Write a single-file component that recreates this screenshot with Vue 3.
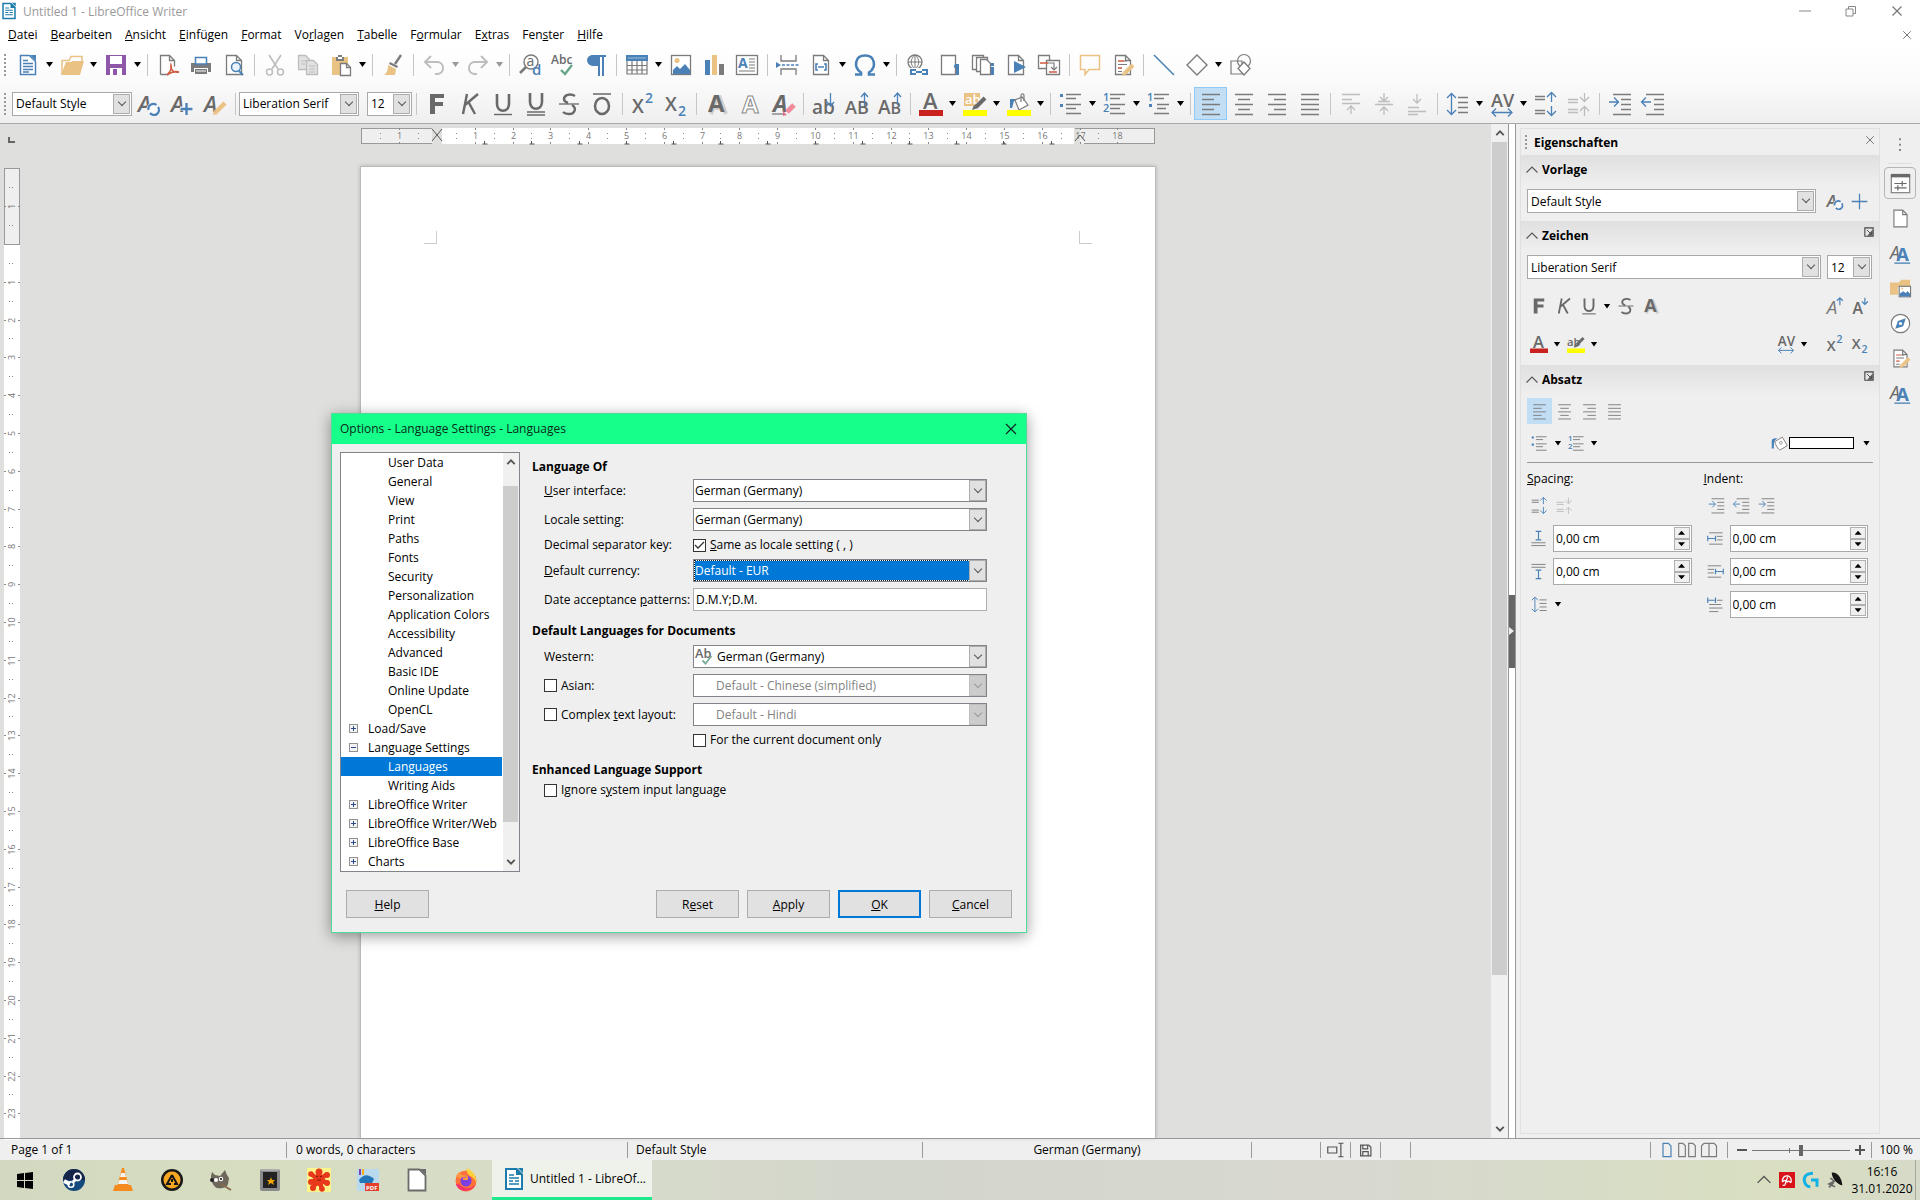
<template>
  <div class="desktop">
    <div class="titlebar">
      <Icon name="writer" :size="18" />
      <span class="caption">Untitled 1 - LibreOffice Writer</span>
      <button class="win" aria-label="Minimieren"><Icon name="minimize" :size="12" /></button>
      <button class="win" aria-label="Verkleinern"><Icon name="restore" :size="12" /></button>
      <button class="win" aria-label="Schließen"><Icon name="close" :size="12" /></button>
    </div>

    <nav class="menubar">
      <button v-for="m in menus" :key="m"><Mnemonic :text="m" /></button>
      <button class="close-doc" aria-label="Dokument schließen"><Icon name="close" :size="10" /></button>
    </nav>

    <div class="toolbar standard">
      <span class="grip"></span>
      <template v-for="(t, i) in standardBar" :key="i">
        <span v-if="t === '|'" class="sep"></span>
        <button v-else-if="t[0] === 'v'" class="drop" :class="{ off: t === 'v-' }" aria-label="Auswahl"></button>
        <button v-else class="tool" :aria-label="t"><Icon :name="t" :size="24" /></button>
      </template>
    </div>

    <div class="toolbar format">
      <span class="grip"></span>
      <div class="combo style-box">
        <select aria-label="Vorlage"><option>Default Style</option></select><i></i>
      </div>
      <button v-for="t in ['styleUpdate', 'styleNew', 'styleEdit']" :key="t" class="tool" :aria-label="t"><Icon :name="t" :size="24" /></button>
      <span class="sep"></span>
      <div class="combo style-box">
        <select aria-label="Schriftart"><option>Liberation Serif</option></select><i></i>
      </div>
      <div class="combo size-box">
        <select aria-label="Schriftgröße"><option>12</option></select><i></i>
      </div>
      <template v-for="(t, i) in formatBar" :key="i">
        <span v-if="t === '|'" class="sep"></span>
        <button v-else-if="t === 'v'" class="drop" aria-label="Auswahl"></button>
        <button v-else class="tool" :class="{ active: t === 'alignLeft' }" :aria-label="t"><Icon :name="t" :size="24" /></button>
      </template>
    </div>

    <main class="work">
      <div class="editor">
        <div class="ruler-row">
          <svg class="tab-kind" width="24" height="20"><path d="M9 9v5h6" fill="none" stroke="#666" stroke-width="2" /></svg>
          <svg class="h-ruler" width="796" height="20">
            <rect x="1.5" y=".5" width="793" height="15" fill="#efefef" stroke="#999" />
            <rect x="72" y="0" width="648" height="16" fill="#dfdfdd" />
            <rect x="82" y="0" width="632" height="16" fill="#fff" />
            <rect x="720" y="0" width="74" height="16" fill="#efefef" />
            <path d="M715 .5h79.500v15H724" fill="none" stroke="#999" />
            <g v-for="n in 20" :key="n">
              <text v-if="n !== 2" :x="cm(n)" y="11" class="num">{{ Math.abs(n - 2) }}</text>
              <path v-if="n !== 2" :d="`M${cm(n)} 0v2M${cm(n)} 14v2`" stroke="#888" />
              <path :d="`M${cm(n) - 19} 5v1m0 4v1`" stroke="#888" />
            </g>
            <path v-for="n in 13" :key="'t' + n" :d="`M${77 + Math.round(n * 47.2)}.5 13v3m-2 0h5`" stroke="#555" fill="none" />
            <path d="M72 1l10 12M82 1l-10 12M715 13l5-6 5 6" stroke="#555" fill="none" />
          </svg>
        </div>
        <div class="page-row">
          <svg class="v-ruler" width="24" height="100%">
            <rect x="4" y="0" width="16" height="100%" fill="#fff" />
            <rect x="4.5" y=".5" width="15" height="76" fill="#efefef" stroke="#999" />
            <g v-for="n in 25" :key="n">
              <text v-if="n !== 2" :transform="`translate(15 ${vcm(n)}) rotate(-90)`" class="num">{{ Math.abs(n - 2) }}</text>
              <path v-if="n !== 2" :d="`M4 ${vcm(n)}h2M18 ${vcm(n)}h2`" stroke="#888" />
              <path :d="`M9 ${vcm(n) - 19}h1m2 0h1`" stroke="#888" />
            </g>
          </svg>
          <article class="sheet">
            <span class="corner left"></span><span class="corner right"></span>
          </article>
        </div>
      </div>

      <div class="scroll">
        <button aria-label="Nach oben"><Icon name="chevUp" :size="10" /></button>
        <div class="thumb"></div>
        <div class="track"></div>
        <button aria-label="Nach unten"><Icon name="chevDown" :size="10" /></button>
      </div>
      <div class="splitter"><button aria-label="Seitenleiste ausblenden"></button></div>

      <aside class="deck">
        <header class="deck-title">
          <span class="grip"></span><b>Eigenschaften</b>
          <button aria-label="Seitenleiste schließen"><Icon name="close" :size="10" /></button>
        </header>

        <section>
          <h2><Icon name="collapse" :size="12" />Vorlage</h2>
          <div class="line first">
            <div class="combo grow"><select aria-label="Absatzvorlage"><option>Default Style</option></select><i></i></div>
            <button class="mini gap-left" aria-label="Vorlage aktualisieren"><Icon name="styleUpdate" :size="18" /></button>
            <button class="mini" aria-label="Neue Vorlage"><Icon name="plus" :size="17" /></button>
          </div>
        </section>

        <section>
          <h2><Icon name="collapse" :size="12" />Zeichen<button class="more" aria-label="Mehr Optionen"><Icon name="launcher" :size="10" /></button></h2>
          <div class="line first">
            <div class="combo grow"><select aria-label="Schriftart"><option>Liberation Serif</option></select><i></i></div>
            <div class="combo size-box"><select aria-label="Schriftgröße"><option>12</option></select><i></i></div>
          </div>
          <div v-for="(bar, b) in [charBar, colorBar]" :key="b" class="line icons">
            <template v-for="(t, i) in bar" :key="i">
              <span v-if="t === '~'" class="fill"></span>
              <span v-else-if="t === '_'" class="space"></span>
              <button v-else-if="t === 'v'" class="drop small" aria-label="Auswahl"></button>
              <button v-else class="mini" :aria-label="t"><Icon :name="t" :size="18" /></button>
            </template>
          </div>
        </section>

        <section class="paragraph">
          <h2><Icon name="collapse" :size="12" />Absatz<button class="more" aria-label="Mehr Optionen"><Icon name="launcher" :size="10" /></button></h2>
          <div class="line aligns">
            <button v-for="t in ['alignLeft', 'alignCenter', 'alignRight', 'alignJustify']" :key="t" class="mini" :class="{ active: t === 'alignLeft' }" :aria-label="t"><Icon :name="t" :size="17" /></button>
          </div>
          <div class="line lists">
            <button class="mini" aria-label="Aufzählung"><Icon name="bullets" :size="17" /></button><button class="drop small" aria-label="Auswahl"></button>
            <button class="mini list" aria-label="Nummerierung"><Icon name="numbers" :size="17" /></button><button class="drop small" aria-label="Auswahl"></button>
            <span class="fill"></span>
            <Icon name="bucketOnly" :size="17" />
            <button class="swatch" aria-label="Hintergrundfarbe"></button><button class="drop wide" aria-label="Auswahl"></button>
          </div>
          <hr />
          <div class="spacing">
            <div class="half">
              <span class="lead"><Mnemonic text="_Spacing:" /></span>
              <div class="line pair">
                <button class="mini" aria-label="Abstand erhöhen"><Icon name="paraInc" :size="17" /></button>
                <button class="mini" aria-label="Abstand verringern"><Icon name="paraDec" :size="17" /></button>
              </div>
              <label v-for="t in ['above', 'below']" :key="t" class="spin-row">
                <Icon :name="t" :size="17" />
                <span class="spin"><input type="text" :aria-label="t" value="0,00 cm" /><span><button aria-label="Mehr"></button><button class="down" aria-label="Weniger"></button></span></span>
              </label>
              <div class="line leading"><button class="mini" aria-label="Zeilenabstand"><Icon name="lineSpace" :size="17" /></button><button class="drop small" aria-label="Auswahl"></button></div>
            </div>
            <div class="half">
              <span class="lead"><Mnemonic text="_Indent:" /></span>
              <div class="line pair">
                <button v-for="(t, i) in ['indent', 'outdent', 'indent']" :key="i" class="mini" :aria-label="t"><Icon :name="t" :size="17" /></button>
              </div>
              <label v-for="t in ['before', 'after', 'firstLine']" :key="t" class="spin-row">
                <Icon :name="t" :size="17" />
                <span class="spin"><input type="text" :aria-label="t" value="0,00 cm" /><span><button aria-label="Mehr"></button><button class="down" aria-label="Weniger"></button></span></span>
              </label>
            </div>
          </div>
        </section>
      </aside>

      <nav class="tabs">
        <button aria-label="Einstellungen"><Icon name="dots" :size="16" /></button>
        <button v-for="(t, i) in tabs" :key="i" :class="{ current: i === 0 }" :aria-label="t"><Icon :name="t" :size="21" /></button>
      </nav>
    </main>

    <footer class="status">
      <span class="pages">Page 1 of 1</span>
      <span class="words">0 words, 0 characters</span>
      <span class="pstyle">Default Style</span>
      <span class="lang">German (Germany)</span>
      <span class="blank"></span>
      <span class="cell"><Icon name="insertMode" :size="18" /></span>
      <span class="cell"><Icon name="floppy" :size="13" /></span>
      <span class="cell"></span>
      <span class="rest"></span>
      <span class="views"><Icon name="viewOne" :size="16" /><Icon name="viewTwo" :size="20" /><Icon name="viewBook" :size="20" /></span>
      <span class="zoom">
        <button aria-label="Verkleinern"><Icon name="minus" :size="12" /></button>
        <input v-model="zoom" type="range" min="0" max="200" aria-label="Zoom" />
        <button aria-label="Vergrößern"><Icon name="plusBold" :size="12" /></button>
      </span>
      <span class="percent">{{ zoom }} %</span>
    </footer>

    <div class="taskbar">
      <button v-for="t in pinned" :key="t" class="pin" :aria-label="t"><Icon :name="t" :size="24" /></button>
      <button class="running"><Icon name="writer" :size="24" />Untitled 1 - LibreOf...</button>
      <span class="fill"></span>
      <Icon name="collapse" :size="14" class="tray" />
      <Icon name="avira" :size="16" class="tray" />
      <Icon name="logi" :size="16" class="tray" />
      <Icon name="dish" :size="16" class="tray" />
      <span class="clock">16:16<br />31.01.2020</span>
      <button class="peek" aria-label="Desktop anzeigen"></button>
    </div>

    <form class="dialog" role="dialog" aria-label="Options" @submit.prevent>
      <header>
        Options - Language Settings - Languages
        <button type="button" aria-label="Close"><Icon name="closeBlack" :size="12" /></button>
      </header>
      <div class="dialog-body">
        <div class="tree">
          <ul>
            <li v-for="n in tree" :key="n.label" :class="{ child: !n.sign, selected: n.label === selected }" @click="selected = n.label">
              <button v-if="n.sign" type="button" class="twisty" :class="{ open: n.sign === '-' }" :aria-label="n.label"></button>
              {{ n.label }}
            </li>
          </ul>
          <div class="scroll">
            <button type="button" aria-label="Up"><Icon name="chevUp" :size="10" /></button>
            <div class="gap"></div>
            <div class="thumb"></div>
            <div class="track"></div>
            <button type="button" aria-label="Down"><Icon name="chevDown" :size="10" /></button>
          </div>
        </div>

        <div class="settings">
          <h3>Language Of</h3>
          <div class="fields">
            <label for="ui"><Mnemonic text="_User interface:" /></label>
            <div class="combo dark"><select id="ui"><option>German (Germany)</option></select><i></i></div>
            <label for="locale">Locale setting:</label>
            <div class="combo dark"><select id="locale"><option>German (Germany)</option></select><i></i></div>
            <span>Decimal separator key:</span>
            <label class="check"><input v-model="sameSeparator" type="checkbox" /><span><Mnemonic text="_Same as locale setting ( , )" /></span></label>
            <label for="currency"><Mnemonic text="_Default currency:" /></label>
            <div class="combo dark focused"><select id="currency"><option>Default - EUR</option></select><i></i></div>
            <label for="dates"><Mnemonic text="Date acceptance _patterns:" /></label>
            <input id="dates" class="text" type="text" value="D.M.Y;D.M." />
          </div>

          <h3 class="second">Default Languages for Documents</h3>
          <div class="fields">
            <label for="western">Western:</label>
            <div class="combo dark spelled"><select id="western"><option>German (Germany)</option></select><Icon name="spellMini" :size="18" /><i></i></div>
            <label class="check"><input type="checkbox" />Asian:</label>
            <div class="combo dark inset off"><select disabled aria-label="Asian"><option>Default - Chinese (simplified)</option></select><i></i></div>
            <label class="check"><input type="checkbox" /><span><Mnemonic text="Complex _text layout:" /></span></label>
            <div class="combo dark inset off"><select disabled aria-label="Complex text layout"><option>Default - Hindi</option></select><i></i></div>
            <span></span>
            <label class="check"><input type="checkbox" />For the current document only</label>
          </div>

          <h3 class="third">Enhanced Language Support</h3>
          <div class="fields">
            <label class="check whole"><input type="checkbox" /><span><Mnemonic text="Ignore s_ystem input language" /></span></label>
          </div>
        </div>
      </div>
      <div class="buttons">
        <button type="button" class="help"><Mnemonic text="_Help" /></button>
        <button type="button"><Mnemonic text="R_eset" /></button>
        <button type="button"><Mnemonic text="_Apply" /></button>
        <button type="submit" class="default"><Mnemonic text="_OK" /></button>
        <button type="button"><Mnemonic text="_Cancel" /></button>
      </div>
    </form>
  </div>
</template>

<script setup>
import { h, ref } from 'vue';

const zoom = ref(100);
const sameSeparator = ref(true);
const selected = ref('Languages');

const menus = ['_Datei', '_Bearbeiten', '_Ansicht', '_Einfügen', '_Format', 'Vo_rlagen', '_Tabelle', 'F_ormular', 'E_xtras', 'Fen_ster', '_Hilfe'];

// '|' is a separator, 'v' a drop-down arrow ('v-' when disabled)
const standardBar = [
  'newDoc', 'v', 'open', 'v', 'save', 'v', '|',
  'pdf', 'print', 'preview', '|',
  'cut', 'copy', 'paste', 'v', '|', 'brush', '|',
  'undo', 'v-', 'redo', 'v-', '|',
  'find', 'spell', 'pilcrow', '|',
  'table', 'v', 'image', 'chart', 'textbox', '|',
  'pageBreak', 'field', 'v', 'omega', 'v', '|',
  'link', 'footnote', 'endnote', 'bookmark', 'crossRef', '|',
  'comment', 'changes', '|', 'diagonal', 'diamond', 'v', 'shapes',
];
const formatBar = [
  '|', 'bold', 'italic', 'underline', 'doubleUnderline', 'strike', 'overline', '|',
  'superscript', 'subscript', '|', 'shadow', 'outline', 'eraser', '|',
  'lower', 'upper', 'smallCaps', '|',
  'fontColor', 'v', 'highlight', 'v', 'bucket', 'v', '|',
  'bullets', 'v', 'numbers', 'v', 'outlineList', 'v', '|',
  'alignLeft', 'alignCenter', 'alignRight', 'alignJustify', '|',
  'vTop', 'vMiddle', 'vBottom', '|',
  'lineSpace', 'v', 'kerning', 'v', 'paraInc', 'paraDec', '|', 'indent', 'outdent',
];
// '~' takes the free width, '_' is a fixed space
const charBar = ['bold', 'italic', 'underline', 'v', 'strike', 'shadow', '~', 'grow', 'shrink'];
const colorBar = ['fontColor', 'v', 'highlightMini', 'v', '~', 'kerning', 'v', '_', 'superscript', 'subscript'];
const tabs = ['properties', 'page', 'styles', 'gallery', 'compass', 'changes', 'styles'];
const pinned = ['windows', 'steam', 'vlc', 'aimp', 'gimp', 'safe', 'splat', 'pdfTool', 'lo', 'firefox'];

const tree = [
  ...['User Data', 'General', 'View', 'Print', 'Paths', 'Fonts', 'Security', 'Personalization', 'Application Colors',
    'Accessibility', 'Advanced', 'Basic IDE', 'Online Update', 'OpenCL'].map((label) => ({ label })),
  { label: 'Load/Save', sign: '+' },
  { label: 'Language Settings', sign: '-' },
  { label: 'Languages' },
  { label: 'Writing Aids' },
  { label: 'LibreOffice Writer', sign: '+' },
  { label: 'LibreOffice Writer/Web', sign: '+' },
  { label: 'LibreOffice Base', sign: '+' },
  { label: 'Charts', sign: '+' },
];

// Ruler positions, zero lies at the page margin
const cm = (n) => Math.round(77 + (n - 2) * 37.8) + 0.5;
const vcm = (n) => Math.round(76 + (n - 2) * 37.8) + 0.5;

const gray = '#7b7b7b';
const dark = '#696969';
const pale = '#bdbdbd';
const blue = '#4a81b7';
const tan = '#e9c284';

const line = (d, c = gray, w = 1.3) => `<path d="${d}" fill="none" stroke="${c}" stroke-width="${w}"/>`;
const area = (d, c) => `<path d="${d}" fill="${c}"/>`;
const text = (s, x, y, size, c = dark, more = '') => `<text x="${x}" y="${y}" font-size="${size}" fill="${c}" ${more}>${s}</text>`;
const sheet = '<path d="M4.5 2.5h10l5 5v14h-15zM14.5 2.5v5h5" fill="#fff" stroke="#7b7b7b" stroke-width="1.3"/>';
const rows = (...r) => line(r.map(([x1, x2, y]) => `M${x1} ${y}H${x2}`).join(''));
const bold = 'font-weight="600"';

const icons = {
  minimize: line('M0 12h24', '#888', 2),
  restore: line('M2 8h14v14H2zM7 8V3h14v14h-5', '#888', 2),
  close: line('M3 3l18 18M21 3L3 21', '#777', 2.4),
  closeBlack: line('M2 2l20 20M22 2L2 22', '#122', 2.4),
  chevUp: line('M3 17l9-9 9 9', '#555', 4.5),
  chevDown: line('M3 7l9 9 9-9', '#555', 4.5),
  collapse: line('M1 17L12 6l11 11', '#555', 2.2),
  writer: area('M3 1h12l6 6v16H3z', '#1c7cab') + area('M5 3h9v5h5v13H5z', '#fff') + area('M16 1h5v5z', '#1c7cab') + line('M7 8h5M7 11h10M7 14h4M13 14h4M7 17h10', '#1c7cab', 1.6),
  newDoc: '<path d="M4.5 2.5h9l6 6v13h-15z" fill="#fff" stroke="#4a81b7" stroke-width="1.5"/>' + area('M14 2h6v6z', blue) + line('M7 7.5h5M7 10.5h10M7 13.5h10M7 16.5h10M7 19h6', blue),
  open: line('M2 21V7.500h7l2-4h11v5', tan, 1.5) + area('M1 22L6 9h5l2-1h11l-4 14z', tan),
  save: area('M2 2h20v20H2z', '#8e57a8') + area('M6 3h12v8H6z', '#fff') + area('M6 15h12v7H6z', '#fff') + area('M9 16h4v6H9z', '#8e57a8'),
  pdf: '<path d="M4.500 21.500v-19h9l5 5v6M13.500 2.500v5h5M4.500 21.500h8" fill="none" stroke="#7b7b7b" stroke-width="1.300"/>' + line('M11 22c4-4 5-7 4-10c-1 5 3 8 8 7c-4-1-8 0-12 3z', '#cf5a3f', 1.5),
  print: area('M2 10h20v9H2z', gray) + '<path d="M6.500 11V4.500h11V11z" fill="#fff" stroke="#4a81b7" stroke-width="1.500"/>' + area('M5 15h14v6H5z', '#fff') + area('M6 16h12v5H6z', gray) + line('M7 18h10', '#ddd'),
  preview: sheet + '<circle cx="14" cy="14" r="4.500" fill="#eaf3fb" stroke="#4a81b7" stroke-width="1.500"/>' + line('M17 18l4 4', blue, 2),
  cut: line('M6 2l9 14M18 2L9 16', pale, 1.6) + '<g fill="none" stroke="#bdbdbd" stroke-width="1.500"><circle cx="6.500" cy="19" r="3"/><circle cx="17.500" cy="19" r="3"/></g>',
  copy: '<g fill="#e2e2e2" stroke="#bdbdbd" stroke-width="1.300"><path d="M2.500 2.500h7l4 4v10h-11z"/><path d="M10.500 7.500h7l4 4v10h-11z"/></g>' + line('M5 8h5M5 11h4M13 13h6M13 16h6M13 19h6', pale, 1),
  paste: area('M3 4h16v18H3z', tan) + area('M7 4h2V2h4v2h2v4H7z', gray) + area('M9 4h4v2H9z', '#fff') + '<path d="M11.500 10.500h6l4 4v8h-10z" fill="#fff" stroke="#7b7b7b" stroke-width="1.300"/>' + line('M17.500 10.500v4h4'),
  brush: line('M20 2l-6 9', gray, 2.4) + area('M9 9l8 4-1 2-8-4z', gray) + area('M7 12l8 4-1 6H3c3-2 4-5 4-10z', tan),
  undo: line('M9 3L3 9l6 6M4 9h11c4 0 6 3 6 6s-2 6-6 6h-2', pale, 2),
  redo: line('M15 3l6 6-6 6M20 9H9c-4 0-6 3-6 6s2 6 6 6h2', pale, 2),
  find: '<circle cx="13" cy="9" r="7" fill="none" stroke="#7b7b7b" stroke-width="1.400"/>' + line('M8 14l-6 6', gray, 2.6) + text('a', 8.5, 13, 14, dark) + text('d', 14, 22, 15, blue, bold),
  spell: text('Abc', 0, 11, 12, dark, bold) + line('M10 17l4 4 7-9', '#67a58a', 2.4),
  pilcrow: area('M9 2h13v2h-2v19h-2V4h-2v19h-2V13H10C1 13 1 2 9 2z', blue),
  table: area('M1 2h22v6H1z', blue) + line('M2 8v13h20V8M2 12.500h20M2 17h20M7 8v13M12 8v13M17 8v13', gray, 1.2) + line('M3 5h18', '#9cc0e0', 1),
  image: '<rect x="2.500" y="2.500" width="19" height="19" fill="#fff" stroke="#7b7b7b" stroke-width="1.300"/><circle cx="8" cy="7.500" r="2.500" fill="#e9c284"/>' + area('M4 21v-4l4-4 3 3 5-5 5 6v4z', blue),
  chart: area('M3 7h5v15H3z', blue) + area('M10 2h5v20h-5z', tan) + area('M17 11h5v11h-5z', gray),
  textbox: '<rect x="1.500" y="2.500" width="21" height="19" fill="#fff" stroke="#7b7b7b" stroke-width="1.300"/>' + text('A', 3, 15, 14, blue, 'font-weight="700"') + line('M14 6h6M14 9h6M14 12h6M14 15h6M4 18h16', gray, 1.2),
  pageBreak: line('M5 2v6h15V2M5 22v-6h15v6') + line('M6 12h17', blue, 1.6).replace('/>', ' stroke-dasharray="3 1.500"/>') + area('M0 9l5 3-5 3z', blue),
  field: sheet + line('M9 11H7v6h2M15 11h2v6h-2M9 14h6', blue, 1.6),
  omega: line('M2 21.500h6v-2C0 14 2 2.500 12 2.500s12 11.500 4 17v2h6', blue, 2.6),
  link: '<circle cx="10" cy="9" r="7" fill="#fff" stroke="#7b7b7b" stroke-width="1.300"/>' + line('M10 2v14M3 9h14M10 2c-5 4-5 10 0 14M10 2c5 4 5 10 0 14', gray, 1) + line('M5 16h17v6H5z', '#fcfcfc', 2) + line('M11 17H6v4h5M11 19h6M17 17h5v4h-5', blue, 2),
  footnote: '<path d="M3.500 2.500h14v19h-14z" fill="#fff" stroke="#7b7b7b" stroke-width="1.300"/>' + area('M17 11h4v11h-3v-8l-2 1v-2z', blue),
  endnote: '<g fill="#fff" stroke="#7b7b7b" stroke-width="1.300"><path d="M1.500 2.500h11v14h-11z"/><path d="M5.500 4.500h11v14h-11z"/><path d="M9.500 6.500h6l4 4v11h-10z"/></g>' + area('M20 10h3v3h-3zM20 14h3v8h-3z', blue),
  bookmark: sheet + area('M10 8l12 6-12 6z', blue),
  crossRef: '<g fill="#fff" stroke="#7b7b7b" stroke-width="1.300"><path d="M1.500 2.500h11v13h-11z"/><path d="M9.500 7.500h13v14h-13z"/></g>' + line('M3 10h8M12 19h8', '#cf5a3f', 1.6) + line('M11 10h6v6M14 14l3 3 3-3', gray, 1.2),
  comment: line('M2.500 2.500h19v14H11l-4 5v-5H2.500z', tan, 1.5),
  changes: sheet + line('M7 8h6M7 15h4', '#cf5a3f', 1.4) + line('M7 11.500h9M7 18.500h4M13 8h3', gray, 1.2) + line('M22 12l-8 8', tan, 4) + area('M12 18l3 4-4 1z', tan),
  diagonal: line('M2 2l20 20', blue, 1.6),
  diamond: line('M12 2l10 10-10 10L2 12z', gray, 1.4),
  shapes: line('M2 8h11v13H2z', gray, 1.2) + '<circle cx="15" cy="8" r="6.500" fill="none" stroke="#7b7b7b" stroke-width="1.200"/>' + '<path d="M15 9l6 6.500-6 6.500-6-6.500z" fill="#fff" stroke="#7b7b7b" stroke-width="1.300"/>',

  styleUpdate: text('A', 1, 20, 22, dark, 'font-style="italic" font-weight="600"') + '<circle cx="16" cy="17" r="6.500" fill="#fafafa"/>' + line('M11.500 18a5 5 0 018-5M21 15a5 5 0 01-8 6', blue, 2.2),
  styleNew: text('A', 1, 20, 22, dark, 'font-style="italic" font-weight="600"') + line('M16 10v13M10 16.500h13', '#fafafa', 4) + line('M16.500 11v12M10.500 17h12', blue, 2.4),
  styleEdit: text('A', 1, 20, 22, dark, 'font-style="italic" font-weight="600"') + line('M22 11l-9 9', tan, 4.5) + area('M10 23l1-5 4 4z', tan),
  plus: line('M12 1v22M1 12h22', blue, 1.8),
  bold: area('M5 2h14v4H10v4h8v4h-8v8H5z', dark),
  italic: line('M9 2L5 22M20 2L7 13M11 11l6 11', dark, 2.4),
  underline: line('M6 2v10c0 9 12 9 12 0V2', dark, 2.6) + line('M3 22.500h18', dark, 1.4),
  doubleUnderline: line('M6 1v9c0 9 12 9 12 0V1', dark, 2.6) + line('M3 20h18M3 23h18', dark, 1.3),
  strike: line('M18 4c-5-3-11-1-11 3c0 2 1 3 4 4M15 13c5 3 3 9-3 9c-3 0-5-1-6-2', dark, 2.4) + line('M2 12h20', dark, 1.3),
  overline: '<ellipse cx="12" cy="14" rx="7" ry="8" fill="none" stroke="#696969" stroke-width="2.500"/>' + line('M3 2h18', dark, 1.5),
  superscript: text('X', 1, 21, 19, dark, bold) + text('2', 14, 11, 14, blue, bold),
  subscript: text('X', 1, 19, 19, dark, bold) + text('2', 14, 24, 14, blue, bold),
  shadow: line('M6 22L12.500 5h2L21 22M9 16h9', '#cfcfcf', 4) + text('A', 3, 20, 24, dark, 'font-weight="700"'),
  outline: text('A', 4, 21, 24, '#fff', 'font-weight="700" stroke="#8a8a8a" stroke-width="1"'),
  eraser: text('A', 2, 20, 23, dark, 'font-weight="700" font-style="italic"') + line('M1 22h13') + line('M23 13l-7 7', '#f08a9b', 5) + area('M12 19l4 4-4 1z', '#e0758b'),
  lower: text('ab', 0, 22, 19, dark, bold) + line('M18.500 1v12M15 10l3.500 4 3.500-4', blue, 1.3),
  upper: text('AB', 0, 22, 18, dark, bold) + line('M19.500 1v13M16 5l3.500-4 3.500 4', blue, 1.3),
  smallCaps: text('A<tspan font-size="16">B</tspan>', 0, 22, 19, dark, bold) + line('M19.500 1v12M16 5l3.500-4 3.500 4', blue, 1.3),
  fontColor: text('A', 4, 17, 22, dark, bold) + area('M0 18h24v6H0z', '#c9211e'),
  highlight: area('M1 1h16v13H1z', tan) + text('ab', 2, 12, 13, '#fff', bold) + line('M22 6l-9 9', dark, 4) + area('M9 18l2-5 4 3z', dark) + area('M0 18h24v6H0z', '#ffff00'),
  highlightMini: text('ab', 0, 14, 15, dark, bold) + line('M22 4l-9 9', dark, 4) + area('M9 17l2-5 4 3z', dark) + area('M0 18h24v6H0z', '#ffff00'),
  bucket: area('M3 16V7h7v2H7l-2 7z', blue) + '<path d="M8 8l7-3 6 8-9 5z" fill="#fff" stroke="#7b7b7b" stroke-width="1.200"/>' + line('M14 10V4c0-3 3-3 3 0v5', gray, 1.2) + area('M0 18h24v6H0z', '#ffff00'),
  bucketOnly: area('M1 19V8c0-2 3-4 8-3l-3 2c-2 3-2 6-2 12z', blue) + '<path d="M6 9l10-6 7 12-10 6c-2 1-8-9-7-12z" fill="#fff" stroke="#7b7b7b" stroke-width="1.300"/><circle cx="14" cy="11" r="2" fill="none" stroke="#7b7b7b"/>',
  bullets: area('M1 2h3v3H1zM1 12h3v3H1z', blue) + rows([7, 22, 2.5], [7, 17, 6.5], [7, 22, 12.5], [7, 17, 16.5], [7, 22, 21.5]),
  numbers: text('1', 0, 9, 11, blue, bold) + text('2', 0, 20, 11, blue, bold) + rows([7, 22, 2.5], [7, 17, 6.5], [7, 22, 12.5], [7, 17, 16.5], [7, 22, 21.5]),
  outlineList: text('1', 0, 9, 11, blue, bold) + area('M2 12h3v3H2z', blue) + rows([7, 22, 2.5], [7, 17, 6.5], [10, 22, 12.5], [10, 19, 16.5], [7, 22, 21.5]),
  alignLeft: rows([3, 21, 2.5], [3, 15, 7.5], [3, 21, 12.5], [3, 15, 17.5], [3, 21, 22.5]),
  alignCenter: rows([3, 21, 2.5], [6, 18, 7.5], [3, 21, 12.5], [6, 18, 17.5], [3, 21, 22.5]),
  alignRight: rows([3, 21, 2.5], [9, 21, 7.5], [3, 21, 12.5], [9, 21, 17.5], [3, 21, 22.5]),
  alignJustify: rows([3, 21, 2.5], [3, 21, 7.5], [3, 21, 12.5], [3, 21, 17.5], [3, 21, 22.5]),
  vTop: line('M3 2.500h18M3 7.500h10M3 11.500h18M12 22v-8M8 18l4-4 4 4', pale),
  vMiddle: line('M6 9.500h12M3 12.500h18M12 1v7M8 5l4 4 4-4M12 23v-7M8 19l4-4 4 4', pale),
  vBottom: line('M12 2v9M8 7l4 4 4-4M3 15.500h11M3 19.500h18M3 22.500h10', pale),
  lineSpace: line('M5.500 2v20M1 6l4.500-4.500L10 6M1 18l4.500 4.500L10 18', blue) + rows([12, 22, 5.5], [12, 22, 10.5], [12, 22, 15.5], [12, 22, 20.5]),
  kerning: text('AV', 1, 15, 18, dark, bold) + line('M2 20.500h20M6 16.500l-4 4 4 4M18 16.500l4 4-4 4', blue),
  paraInc: rows([1, 11, 4.5], [1, 11, 7.5], [1, 11, 18.5], [1, 11, 21.5]) + line('M17.500 1v9M13 5l4.500-4.500L22 5M17.500 14v9M13 19l4.500 4.500L22 19', blue),
  paraDec: line('M1 7.500h10M1 10.500h10M1 17.500h10M1 20.500h10M17.500 1v8M13 5l4.500 4.500L22 5M17.500 15v9M13 19l4.500-4.500L22 19', pale),
  indent: rows([5, 23, 2.5], [13, 23, 7.5], [13, 23, 12.5], [13, 23, 17.5], [5, 23, 22.5]) + line('M1 10h9M6 5.500l4.500 4.500L6 14.500', blue),
  outdent: rows([5, 23, 2.5], [13, 23, 7.5], [13, 23, 12.5], [13, 23, 17.5], [5, 23, 22.5]) + line('M1 10h9M5 5.500L.5 10 5 14.500', blue),
  above: line('M8 2h8M8 14h8M12 2v12', blue, 1.6) + rows([2, 22, 18], [2, 22, 22]),
  below: line('M8 10h8M8 22h8M12 10v12', blue, 1.6) + rows([2, 22, 2], [2, 22, 6]),
  before: line('M1 8v8M12 8v8M1 12h11', blue, 1.6) + rows([3, 22, 4], [14, 22, 9], [14, 22, 14], [3, 22, 20]),
  after: line('M12 8v8M23 8v8M12 12h11', blue, 1.6) + rows([1, 20, 4], [1, 10, 9], [1, 10, 14], [1, 20, 20]),
  firstLine: line('M1 2v8M12 2v8M1 6h11', blue, 1.6) + rows([14, 22, 6], [3, 20, 12], [3, 22, 17], [3, 16, 22]),
  grow: text('A', 1, 22, 25, gray, 'font-style="italic"') + line('M18.500 1v10M14.500 5l4-4 4 4', blue, 1.6),
  shrink: text('A', 2, 22, 21, dark, 'font-weight="600"') + line('M18.500 1v9M14.500 6l4 4 4-4', blue, 1.6),
  launcher: line('M2 2h20v20H2z', '#444', 2.6) + area('M21 6v15H8z', '#555') + line('M7 7l10 10', '#555', 2.4),

  dots: area('M11 2h2v3h-2zM11 10h2v3h-2zM11 18h2v3h-2z', '#555'),
  properties: '<rect x="1.500" y="2.500" width="21" height="20" fill="#fff" stroke="#7b7b7b" stroke-width="1.300"/>' + area('M1 1h22v4H1z', dark) + line('M5 12h14M14 9v6M5 17h14M9 14v6', dark, 1.4),
  page: sheet,
  styles: text('A', 0, 18, 20, dark, 'font-style="italic"') + text('A', 7, 21, 21, blue, 'font-weight="700"') + line('M5 23h18', blue, 1.5),
  gallery: area('M0 19V5h10l3-3h10v8H9v9z', tan) + '<rect x="10.500" y="9.500" width="13" height="12" fill="#fff" stroke="#7b7b7b" stroke-width="1.300"/>' + area('M11 21v-3l4-3 3 2 2-2 3 3v3z', blue) + area('M13 11h2v2h-2z', tan),
  compass: '<circle cx="12" cy="12" r="10.500" fill="#fff" stroke="#7b7b7b" stroke-width="1.300"/>' + area('M18 6l-3 9-9 3 3-9z', blue) + '<circle cx="12" cy="12" r="1.800" fill="#fff"/>',

  insertMode: line('M1 8h12v8H1zM18.500 3v18M15 3h7M15 21h7', '#555', 1.6),
  floppy: line('M3 2h15l4 4v16H3zM7 2v7h9V2M7 22v-8h10v8', '#555', 2.2),
  viewOne: line('M6 2h8l4 4v16H6z', blue, 1.8),
  viewTwo: line('M2 4h5l3 3v13H2zM14 4h5l3 3v13h-8z', gray, 1.4),
  viewBook: line('M3 20V7l3-3h6v16zM12 4h6l3 3v13h-9', gray, 1.4),
  minus: line('M2 12h20', '#555', 4),
  plusBold: line('M12 2v20M2 12h20', '#555', 4),
  spellMini: text('Ab', 0, 14, 17, dark, bold) + line('M10 18l4 4 8-10', '#7fae9b', 2.6),

  windows: area('M4 6l7-1v7H4zM12 5l8-1v8h-8zM4 13h7v7l-7-1zM12 13h8v8l-8-1z', '#000'),
  steam: '<circle cx="12" cy="12" r="11" fill="#144a7c"/>' + area('M1 12a11 11 0 0122 0z', '#16244a') + '<circle cx="15.500" cy="9" r="3.500" fill="none" stroke="#fff" stroke-width="1.800"/>' + line('M2 13l6 3', '#fff', 4) + '<circle cx="9" cy="16.500" r="2.800" fill="none" stroke="#fff" stroke-width="1.600"/>' + line('M11 14l3-3', '#fff', 3),
  vlc: area('M4 17h16l2 6H2z', '#f58a1f') + area('M11 0h2l5 19H6z', '#f58a1f') + area('M10 5h4l1 4H9zM8 12h8l1 4H7z', '#f4f4f4'),
  aimp: '<circle cx="12" cy="12" r="11" fill="#181818"/><circle cx="12" cy="12" r="8.500" fill="#f5a623"/>' + line('M12 7l-5 9h4M12 7l5 9h-3M12 11v3', '#181818', 2),
  gimp: area('M2 8l1-4 3 3 5 1 5-6 2 5 2 3-1 6c-1 4-8 5-11 4s-6-6-6-12z', '#6d675c') + '<circle cx="7" cy="12" r="2" fill="#fff"/><circle cx="12" cy="11" r="2.200" fill="#fff"/><circle cx="12" cy="11" r="1"/><circle cx="3" cy="12" r="2" fill="#222"/>' + line('M12 16l10 6', '#8a6a4c', 2),
  safe: '<rect x="2" y="1" width="20" height="22" rx="2" fill="#8a8a8a"/><rect x="5" y="4" width="14" height="16" fill="#222"/>' + area('M13 9l1 3h3l-2 2 1 3-3-2-3 2 1-3-2-2h3z', '#f5a800') + line('M3 2h18', '#ccc', 1),
  splat: area('M0 0h24v24H0z', '#fdf58b') + line('M12 12V4M12 12l8-6M12 12l9 3M12 12l3 9M12 12l-7 8M12 12l-9 2M12 12L4 6', '#e8391d', 4.5) + '<g fill="#e8391d"><circle cx="12" cy="12" r="6"/><circle cx="12" cy="4" r="3.500"/><circle cx="20" cy="7" r="3"/><circle cx="20" cy="15" r="3"/><circle cx="15" cy="21" r="2.800"/><circle cx="6" cy="20" r="3"/><circle cx="4" cy="14" r="3"/><circle cx="4" cy="6" r="2.800"/></g>' + line('M9 8l2 1M13 9l2-1M10 12h4', '#8a1a10', 1.2),
  pdfTool: area('M1 1h22v22H1z', '#b8d9ee') + area('M3 1h2v6H3z', '#7c3fae') + area('M6 1h2v6H6z', '#f2b01e') + area('M3 12c5-6 9-6 15-1l-2 4H4z', '#2377b8') + area('M9 15h14v8H9z', '#e2402a') + text('PDF', 10, 22, 6, '#fff', 'font-weight="700"'),
  lo: '<path d="M3.500 1.500h11l6 6v15h-17z" fill="#fff" stroke="#6b6b6b" stroke-width="1.800"/>' + area('M15 1h6v6z', '#6b6b6b'),
  firefox: '<circle cx="12" cy="13" r="10.500" fill="#ff7139"/>' + area('M13 0c6 3 10 8 9 15c-1-4-3-6-6-7c-3-3-4-5-3-8z', '#ffd23c') + area('M2 8l3-4 3 3 4 1-4 4z', '#ff9640') + '<circle cx="12" cy="13" r="5.500" fill="#7a3fe0"/>' + area('M2 16c2 9 16 9 20 0c-2 3-7 5-11 4s-6-5-9-4z', '#f4326a') + line('M8 9c3-2 6 0 5 2h-4', '#ff9640', 2),
  avira: area('M0 0h24v24H0z', '#d81419') + line('M5 15c0-7 3-10 9-9c4 2 5 6 4 10M5 15c3-3 5-3 7 0c1-2 3-2 6 1', '#fff', 2) + line('M13 7l-4 12c-1 2-3 1-3 0', '#fff', 1.8),
  logi: line('M15 2C5 2 1 7 2 13c1 6 5 9 9 9M12 12h9v10', '#12b1e6', 4.5),
  dish: area('M7 1c9-1 15 8 16 19c-7-1-15-9-16-19z', '#151515') + line('M5 9l6 5-8 4 9 4M3 23l7-7', '#666', 2.4),
};

const Icon = (props) => h('svg', { viewBox: '0 0 24 24', width: props.size, height: props.size, 'aria-hidden': 'true', innerHTML: icons[props.name] });
Icon.props = ['name', 'size'];

// The letter after the underscore is the access key
const Mnemonic = (props) => {
  const [before, after] = props.text.split('_');
  return [before, h('u', after[0]), after.slice(1)];
};
Mnemonic.props = ['text'];
</script>

<style>
body {
  margin: 0;
}
</style>

<style scoped>
.desktop {
  position: relative;
  display: flex;
  flex-direction: column;
  height: 100vh;
  overflow: hidden;
  font: 12px/16px "Open Sans", "Noto Sans", sans-serif;
  color: #000;
  background: #efefef;
}

button {
  padding: 0;
  border: 0;
  background: none;
  font: inherit;
  color: inherit;
}

svg {
  flex: none;
  display: block;
  overflow: visible;
}

.fill {
  flex: 1;
}

/* Title and menu */
.titlebar {
  display: flex;
  align-items: center;
  height: 22px;
  background: #fff;
  color: #999;
}
.caption {
  flex: 1;
  padding: 2px 0 0 5px;
}
.win {
  display: grid;
  place-items: center;
  width: 46px;
  height: 22px;
}
.menubar {
  display: flex;
  align-items: center;
  height: 25px;
  padding-left: 8px;
  gap: 13px;
  background: #fff;
}
.menubar .close-doc {
  margin-left: auto;
  margin-right: 8px;
}

/* Toolbars */
.toolbar {
  display: flex;
  align-items: center;
}
.standard {
  height: 35px;
  padding-bottom: 2px;
  background: linear-gradient(#fff, #fafafa);
}
.format {
  height: 39px;
  background: linear-gradient(#fafafa, #efefef);
  border-bottom: 1px solid #a9a9a9;
}
.grip {
  width: 2px;
  height: 22px;
  margin: 0 5px 0 4px;
  background: repeating-linear-gradient(#999 0 2px, transparent 2px 4px);
}
.format .grip {
  margin-right: 6px;
}
.tool {
  display: grid;
  place-items: center;
  width: 33px;
  height: 33px;
  box-sizing: border-box;
  border: 1px solid transparent;
}
.active {
  background: #c2def5;
  border-color: #90c8f6;
}
.sep {
  width: 1px;
  height: 22px;
  margin: 0 3px 0 4px;
  background: #c6c6c6;
}
.drop {
  width: 11px;
  height: 24px;
}
.drop::after {
  content: "";
  display: block;
  margin: 0 auto;
  width: 7px;
  height: 5px;
  background: #000;
  clip-path: polygon(0 0, 100% 0, 50% 100%);
}
.drop.off::after {
  background: #999;
}
.drop.small {
  width: 12px;
}

/* Drop-down boxes */
.combo {
  display: grid;
  height: 24px;
  box-sizing: border-box;
  border: 1px solid #a9a9a9;
  background: #fff;
}
.combo > * {
  grid-area: 1 / 1;
}
.combo select {
  appearance: none;
  width: 100%;
  padding: 1px 18px 0 3px;
  border: 0;
  outline: 0;
  background: none;
  font: inherit;
  color: inherit;
}
.combo i {
  justify-self: end;
  display: grid;
  place-items: center;
  width: 15px;
  margin: 1px;
  border: 1px solid #adadad;
  background: #e1e1e1;
  pointer-events: none;
}
.combo i::after {
  content: "";
  width: 5px;
  height: 5px;
  border: solid #555;
  border-width: 0 1px 1px 0;
  transform: translateY(-2px) rotate(45deg);
}
.style-box {
  width: 120px;
}
.size-box {
  width: 45px;
  margin-left: 8px;
}
.dark {
  height: 23px;
  border-color: #82848c;
}
.combo.dark select {
  padding-top: 0;
  padding-left: 1px;
}
.dark i {
  margin: 0;
}
.combo.focused select {
  margin: 1px 17px 1px 1px;
  padding: 0;
  width: auto;
  background: #0078d7;
  color: #fff;
  outline: 1px dotted #222;
}
.spelled svg {
  margin: 1px 0 0 1px;
}
.combo.spelled select {
  padding-left: 23px;
}
.combo.inset select {
  padding-left: 22px;
}
.off {
  color: #838383;
}
.off select {
  opacity: 1;
}
.off i {
  background: #ccc;
  border-color: #bfbfbf;
}
.off i::after {
  border-color: #999;
}

/* Document area */
.work {
  flex: 1;
  display: flex;
  min-height: 0;
}
.editor {
  flex: 1;
  display: flex;
  flex-direction: column;
  min-width: 0;
  background: #dfdfdd;
}
.ruler-row {
  display: flex;
  height: 40px;
  padding-top: 4px;
  box-sizing: border-box;
}
.h-ruler {
  margin: 0 auto;
}
.num {
  font-size: 9px;
  fill: #777;
  text-anchor: middle;
}
.page-row {
  flex: 1;
  display: flex;
  min-height: 0;
  padding-top: 2px;
}
.v-ruler {
  margin-top: 2px;
  overflow: hidden;
}
.sheet {
  display: flex;
  justify-content: space-between;
  width: 794px;
  margin: 0 auto;
  border: 1px solid #bbb;
  border-bottom: 0;
  background: #fff;
  box-shadow: 0 0 4px rgba(0, 0, 0, 0.2);
}
.corner {
  width: 12px;
  height: 12px;
  margin: 64px 63px 0;
  border: 1px solid #ccc;
  border-width: 0 1px 1px 0;
}
.corner.right {
  border-width: 0 0 1px 1px;
}

.scroll {
  display: flex;
  flex-direction: column;
  width: 17px;
  background: #f0f0f0;
}
.scroll button {
  display: grid;
  place-items: center;
  height: 18px;
}
.scroll .thumb {
  flex: 832;
  margin: 0 1px;
  background: #cdcdcd;
}
.scroll .track {
  flex: 145;
}
.splitter {
  display: flex;
  align-items: center;
  width: 6px;
  border: solid #999;
  border-width: 0 1px;
  background: #fff;
}
.splitter button {
  width: 6px;
  height: 73px;
  background: #666;
}
.splitter button::after {
  content: "";
  display: block;
  width: 5px;
  height: 8px;
  background: #eee;
  clip-path: polygon(0 0, 100% 50%, 0 100%);
}

/* Sidebar */
.deck {
  width: 358px;
  margin: 4px 0 4px 4px;
  border: 1px solid #e0e0e0;
}
.deck-title {
  display: flex;
  align-items: center;
  height: 26px;
}
.deck-title .grip {
  height: 14px;
  margin-right: 7px;
}
.deck-title b {
  flex: 1;
  padding-top: 2px;
}
.deck-title button {
  margin: -4px 4px 0 0;
}
.deck h2 {
  display: flex;
  align-items: center;
  gap: 4px;
  height: 30px;
  margin: 0;
  padding: 0 5px;
  font-size: 12px;
  line-height: 16px;
  background: linear-gradient(#e0e0e0, #efefef);
}
.more {
  margin: -8px 0 0 auto;
}
.line {
  display: flex;
  align-items: center;
  padding: 0 6px;
}
.line.first {
  height: 24px;
  padding: 4px 7px 8px 6px;
}
.grow {
  flex: 1;
}
.deck .size-box {
  margin-left: 6px;
}
.mini {
  display: grid;
  place-items: center;
  width: 25px;
  height: 26px;
  box-sizing: border-box;
  border: 1px solid transparent;
}
.gap-left {
  margin-left: 6px;
}
.space {
  width: 12px;
}
.line.icons {
  height: 38px;
  padding: 0 7px 0 5px;
}
.paragraph {
  margin-top: 2px;
}
.line.aligns {
  padding-top: 3px;
  height: 26px;
}
.line.lists {
  height: 38px;
  padding-right: 0;
}
.lists .list {
  width: 24px;
}
.swatch {
  width: 65px;
  height: 12px;
  margin-left: 1px;
  border: 1px solid #000;
  background: #fff;
}
.drop.wide {
  width: 25px;
}
.deck hr {
  height: 1px;
  margin: 0 6px;
  border: 0;
  background: #999;
}
.spacing {
  display: grid;
  grid-template-columns: 1fr 1fr;
  gap: 12px;
  padding: 8px 11px 0 6px;
}
.lead {
  display: block;
  height: 17px;
}
.pair {
  height: 34px;
  padding: 0 0 3px;
}
.spin-row {
  display: flex;
  align-items: center;
  gap: 6px;
  padding-left: 3px;
  margin-bottom: 6px;
}
.spin {
  flex: 1;
  display: flex;
  height: 27px;
  padding: 1px;
  box-sizing: border-box;
  border: 1px solid #a9a9ad;
  background: #fff;
}
.spin input {
  flex: 1;
  min-width: 0;
  width: 0;
  padding: 0 1px;
  border: 0;
  outline: 0;
  font: inherit;
}
.spin > span {
  display: flex;
  flex-direction: column;
  width: 16px;
}
.spin button {
  flex: 1;
  display: grid;
  place-items: center;
  border: 1px solid #b0b0b0;
  background: #efefef;
}
.spin button::after {
  content: "";
  width: 7px;
  height: 4px;
  background: #000;
  clip-path: polygon(50% 0, 100% 100%, 0 100%);
}
.spin .down::after {
  clip-path: polygon(0 0, 100% 0, 50% 100%);
}
.leading {
  padding: 0;
}

.tabs {
  display: flex;
  flex-direction: column;
  align-items: center;
  gap: 3px;
  width: 40px;
  padding-top: 4px;
}
.tabs button {
  display: grid;
  place-items: center;
  width: 32px;
  height: 32px;
  box-sizing: border-box;
  border: 1px solid transparent;
}
.tabs button:first-child {
  width: 24px;
  height: 36px;
  padding-bottom: 3px;
  border-bottom-color: #ddd;
}
.tabs .current {
  border-color: #b5b5b5;
  border-radius: 4px;
}

/* Status bar */
.status {
  display: flex;
  align-items: center;
  height: 21px;
  border-top: 1px solid #999;
}
.status > span {
  display: flex;
  align-items: center;
  height: 16px;
  padding-top: 1px;
  box-sizing: border-box;
  border-right: 1px solid #999;
}
.status .pages {
  flex: 0 1 287px;
  padding-left: 11px;
}
.status .words {
  flex: 0 1 341px;
  padding-left: 9px;
}
.status .pstyle {
  flex: 0 1 295px;
  padding-left: 8px;
}
.status .lang {
  flex: 0 1 329px;
  justify-content: center;
}
.status .blank {
  width: 69px;
}
.status .cell {
  width: 30px;
  justify-content: center;
}
.status .rest {
  flex: 1;
}
.status .views {
  width: 77px;
  gap: 2px;
  padding-left: 8px;
}
.status .zoom {
  width: 144px;
  gap: 4px;
  padding: 1px 5px 0 8px;
}
.status .percent {
  width: 48px;
  justify-content: center;
  border: 0;
}
.zoom input {
  appearance: none;
  flex: 1;
  min-width: 0;
  height: 12px;
  margin: 0;
  background:
    linear-gradient(#777, #777) 37px 4px / 1px 5px no-repeat,
    linear-gradient(#777, #777) 0 6px / 100% 1px no-repeat;
}
.zoom input::-webkit-slider-thumb {
  appearance: none;
  width: 4px;
  height: 11px;
  background: #666;
}

/* Taskbar */
.taskbar {
  display: flex;
  align-items: center;
  height: 40px;
  background: linear-gradient(90deg, #d3d9c0, #d6ddc0 14%, #d8dccb 30%, #d3d6cb 45%, #d8d8d0 70%, #d7dcc8 82%, #d9dfc0 92%, #d6dac8);
}
.pin {
  display: grid;
  place-items: center;
  width: 49px;
  height: 40px;
}
.running {
  display: flex;
  align-items: center;
  gap: 4px;
  width: 160px;
  height: 40px;
  margin-left: 2px;
  padding: 0 10px;
  box-sizing: border-box;
  border-bottom: 3px solid #1fe98c;
  background: #eff2ea;
  white-space: nowrap;
}
.tray {
  margin-right: 8px;
}
.clock {
  width: 62px;
  margin-right: 2px;
  line-height: 17px;
  text-align: center;
}
.peek {
  width: 5px;
  height: 40px;
  border-left: 1px solid #a5a896;
}

/* Options dialog */
.dialog {
  position: absolute;
  left: 331px;
  top: 413px;
  width: 696px;
  box-sizing: border-box;
  border: 1px solid #4fdc98;
  background: #efefef;
  box-shadow: 0 3px 14px rgba(0, 0, 0, 0.4);
}
.dialog header {
  display: flex;
  align-items: center;
  justify-content: space-between;
  height: 30px;
  padding: 0 9px 0 8px;
  background: #17ff8b;
  color: #082a18;
}
.dialog-body {
  display: flex;
  gap: 12px;
  padding: 8px 8px 0;
}
.tree {
  display: flex;
  width: 180px;
  box-sizing: border-box;
  border: 1px solid #82848c;
  background: #fff;
}
.tree ul {
  flex: 1;
  margin: 0;
  padding: 0 1px 0 0;
  list-style: none;
}
.tree li {
  display: flex;
  align-items: center;
  height: 19px;
  padding-left: 8px;
  white-space: nowrap;
}
.tree .child {
  padding-left: 47px;
}
.tree .selected {
  background: #0078d7;
  color: #fff;
}
.twisty {
  width: 9px;
  height: 9px;
  margin-right: 10px;
  box-sizing: border-box;
  border: 1px solid #919191;
  background:
    linear-gradient(#2b4b90, #2b4b90) center / 5px 1px no-repeat,
    linear-gradient(#2b4b90, #2b4b90) center / 1px 5px no-repeat,
    #f3f3f3;
}
.twisty.open {
  background: linear-gradient(#2b4b90, #2b4b90) center / 5px 1px no-repeat, #f3f3f3;
}
.tree .scroll {
  width: 16px;
}
.tree .gap {
  flex: 15;
}
.tree .thumb {
  flex: 336;
  margin: 0 1px 0 0;
}
.tree .track {
  flex: 31;
}
.settings {
  flex: 1;
  padding: 6px 31px 0 0;
}
h3 {
  margin: 0 0 4px;
  font-size: 12px;
  line-height: 17px;
}
.second {
  margin: 11px 0 6px;
}
.third {
  margin-top: 13px;
}
.fields {
  display: grid;
  grid-template-columns: 149px 1fr;
  align-items: center;
  row-gap: 6px;
  padding-left: 12px;
}
.check {
  display: flex;
  align-items: center;
  gap: 4px;
  height: 16px;
  white-space: nowrap;
}
.whole {
  grid-column: 1 / 3;
}
.check input {
  appearance: none;
  width: 13px;
  height: 13px;
  margin: 0;
  box-sizing: border-box;
  border: 1px solid #333;
  background: #fff;
}
.check input:checked {
  background: #fff url("data:image/svg+xml,%3Csvg xmlns='http://www.w3.org/2000/svg' viewBox='0 0 11 11'%3E%3Cpath d='M1 5l3 3 6-6' fill='none' stroke='%23333' stroke-width='1.3'/%3E%3C/svg%3E");
}
.text {
  height: 23px;
  padding: 0 2px;
  box-sizing: border-box;
  border: 1px solid #adadb3;
  font: inherit;
}
.buttons {
  display: flex;
  gap: 8px;
  padding: 18px 14px 14px;
}
.buttons button {
  width: 83px;
  height: 28px;
  padding-top: 1px;
  border: 1px solid #adadad;
  background: #e1e1e1;
}
.buttons .help {
  margin-right: auto;
}
.buttons .default {
  border: 2px solid #0078d7;
}
</style>
